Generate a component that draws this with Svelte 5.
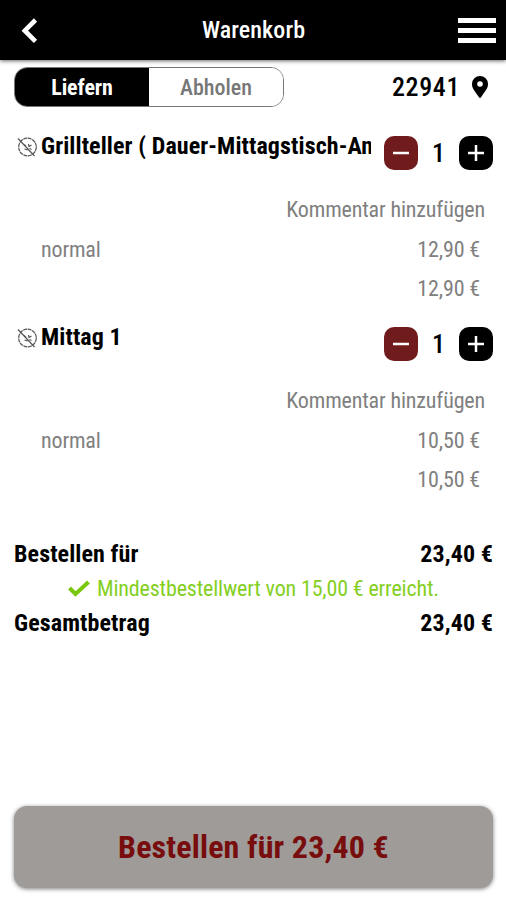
<script>
  const postcode = "22941";
  const total = "23,40 €";

  let items = $state([
    { id: 1, name: "Grillteller ( Dauer-Mittagstisch-An", variant: "normal", price: "12,90 €", sum: "12,90 €", count: 1 },
    { id: 2, name: "Mittag 1", variant: "normal", price: "10,50 €", sum: "10,50 €", count: 1 },
  ]);
  let mode = $state("liefern");

  const remove = (item) => {
    if (item.count > 0) item.count -= 1;
  };
  const add = (item) => {
    item.count += 1;
  };
</script>

<main>
  <header>
    <button class="back" aria-label="Zurück">
      <svg width="18" height="26" viewBox="0 0 18 26">
        <path d="M15.500 3 4.800 13.700l10.700 10.700" fill="none" stroke="#fff" stroke-width="4.600" />
      </svg>
    </button>
    <h1>Warenkorb</h1>
    <button class="menu" aria-label="Menü">
      <i></i>
      <i></i>
      <i></i>
    </button>
  </header>

  <section class="top">
    <div class="switch">
      <button class:active={mode === "liefern"} onclick={() => (mode = "liefern")}>Liefern</button>
      <button class:active={mode === "abholen"} onclick={() => (mode = "abholen")}>Abholen</button>
    </div>
    <div class="place">
      <span>{postcode}</span>
      <svg width="16" height="22" viewBox="0 0 16 22">
        <path
          fill="#000"
          fill-rule="evenodd"
          d="M8 0a8 8 0 0 0-8 8c0 3.500 1.300 5.300 7 13.300q1 1.400 2 0C14.700 13.300 16 11.500 16 8a8 8 0 0 0-8-8Zm0 5.200a2.800 2.800 0 1 1 0 5.600 2.800 2.800 0 0 1 0-5.600Z"
        />
      </svg>
    </div>
  </section>

  {#each items as item (item.id)}
    <article>
      <div class="row head">
        <svg class="badge" width="22" height="22" viewBox="0 0 22 22" fill="none" stroke="#555" stroke-width="1.200">
          <circle cx="11.500" cy="11" r="8.800" stroke-dasharray="4 0.600" />
          <path d="m2 2.500 16.500 17.500M8 8.500l2 1.500M12.500 8l.5 2.500 2.500-1.500M8.500 13l3 1M13.500 12.500l2 1" />
        </svg>
        <h2>{item.name}</h2>
        <div class="counter">
          <button class="minus" aria-label="Weniger" onclick={() => remove(item)}>
            <svg width="18" height="18" viewBox="0 0 18 18"><path d="M1 9h16" /></svg>
          </button>
          <span>{item.count}</span>
          <button class="plus" aria-label="Mehr" onclick={() => add(item)}>
            <svg width="18" height="18" viewBox="0 0 18 18"><path d="M1 9h16M9 1v16" /></svg>
          </button>
        </div>
      </div>
      <div class="comment">Kommentar hinzufügen</div>
      <div class="row line">
        <span>{item.variant}</span>
        <span>{item.price}</span>
      </div>
      <div class="row line sum">
        <span>{item.sum}</span>
      </div>
    </article>
  {/each}

  <section class="totals">
    <div class="row"><span>Bestellen für</span><span>{total}</span></div>
    <p>
      <svg width="22" height="17" viewBox="0 0 22 17">
        <path d="m1.500 8 6 6L20.500 2" fill="none" stroke="#7ac70c" stroke-width="4" />
      </svg>
      Mindestbestellwert von 15,00 € erreicht.
    </p>
    <div class="row"><span>Gesamtbetrag</span><span>{total}</span></div>
  </section>

  <button class="order">Bestellen für {total}</button>
</main>

<style>
  :global(body) {
    margin: 0;
    background: #fff;
  }
  main {
    box-sizing: border-box;
    display: flex;
    flex-direction: column;
    width: 506px;
    height: 900px;
    overflow: hidden;
    font-family: "Roboto Condensed", Roboto, sans-serif;
    font-stretch: condensed;
    font-size: 22px;
    letter-spacing: 0;
    color: #000;
  }
  button {
    border: 0;
    padding: 0;
    font: inherit;
    letter-spacing: inherit;
    cursor: pointer;
  }
  svg {
    display: block;
    flex: none;
  }
  header {
    display: flex;
    align-items: center;
    justify-content: space-between;
    height: 60px;
    flex: none;
    box-sizing: border-box;
    padding: 0 10px 0 20px;
    background: #000;
    box-shadow: 0 1px 4px rgba(0, 0, 0, 0.6);
  }
  .back {
    width: 29px;
    background: none;
  }
  h1 {
    margin: 0;
    font-size: 24px;
    font-weight: 500;
    letter-spacing: 0.1px;
    color: #fff;
  }
  .menu {
    display: flex;
    flex-direction: column;
    gap: 5px;
    width: 38px;
    background: none;
  }
  .menu i {
    height: 5px;
    background: #fff;
  }
  .top {
    display: flex;
    justify-content: space-between;
    align-items: center;
    height: 40px;
    flex: none;
    margin: 7px 18px 0 14px;
  }
  .switch {
    box-sizing: border-box;
    display: flex;
    width: 270px;
    height: 40px;
    border: 1px solid #777;
    border-radius: 13px;
    overflow: hidden;
  }
  .switch button {
    flex: 1;
    background: #fff;
    color: #777;
    font-weight: 500;
  }
  .switch .active {
    background: #000;
    color: #fff;
    font-weight: 700;
    letter-spacing: -0.1px;
  }
  .place {
    display: flex;
    align-items: center;
    gap: 12px;
    font-size: 26px;
    font-weight: 500;
    letter-spacing: 0.6px;
  }
  .row {
    display: flex;
    justify-content: space-between;
    align-items: center;
  }
  article {
    height: 191px;
    flex: none;
    color: #808080;
    letter-spacing: -0.15px;
  }
  .head {
    align-items: flex-start;
    height: 82px;
    padding: 0 13px 0 16px;
  }
  .badge {
    margin-top: 29px;
  }
  h2 {
    flex: 1;
    margin: 24px 13px 0 3px;
    min-width: 0;
    font-size: 24px;
    line-height: 30px;
    font-weight: 700;
    letter-spacing: 0.1px;
    color: #000;
    white-space: nowrap;
    overflow: hidden;
  }
  .counter {
    display: flex;
    align-items: center;
    justify-content: space-between;
    width: 109px;
    margin-top: 29px;
    font-size: 26px;
    font-weight: 500;
    color: #000;
  }
  .counter button {
    display: flex;
    align-items: center;
    justify-content: center;
    width: 34px;
    height: 34px;
    border-radius: 10px;
    background: #000;
  }
  .counter .minus {
    background: #701c1c;
  }
  .counter path {
    stroke: #fff;
    stroke-width: 2.5;
  }
  .comment {
    height: 41px;
    line-height: 41px;
    padding-right: 21px;
    text-align: right;
  }
  .line {
    height: 39px;
    padding: 0 26px 0 41px;
  }
  .sum {
    justify-content: flex-end;
  }
  .totals {
    margin: 48px 13px 0 14px;
    font-size: 24px;
    font-weight: 700;
    letter-spacing: 0.1px;
  }
  .totals .row {
    height: 34px;
  }
  p {
    display: flex;
    align-items: center;
    gap: 7px;
    height: 35px;
    margin: 0 0 0 54px;
    font-size: 22px;
    font-weight: 400;
    letter-spacing: -0.16px;
    color: #84cf22;
  }
  p svg {
    margin-bottom: 1px;
  }
  .order {
    height: 82px;
    margin: auto 13px 12px 14px;
    border-radius: 13px;
    background: #9f9b99;
    box-shadow: 0 1px 4px rgba(0, 0, 0, 0.5);
    font-size: 32px;
    font-weight: 700;
    letter-spacing: 0.15px;
    color: #780d0d;
  }
</style>
